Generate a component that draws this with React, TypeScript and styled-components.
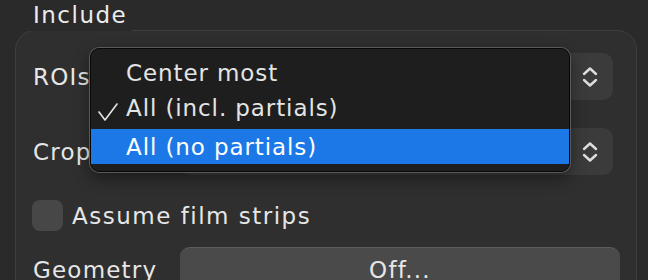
import React from "react";
import styled, { createGlobalStyle } from "styled-components";

const Global = createGlobalStyle`
  html, body { margin: 0; padding: 0; background: #2a2a2a; overflow: hidden; }
  body { font-family: "DejaVu Sans", "Open Sans", sans-serif; color: #e4e4e4; }
`;

const Page = styled.div`
  width: 648px;
  height: 280px;
  padding: 0 11px 0 15px;
  box-sizing: border-box;
  position: relative;
  display: flex;
  flex-direction: column;
  align-items: stretch;
`;

const Title = styled.div`
  position: relative;
  z-index: 1;
  align-self: flex-start;
  height: 31px;
  margin-bottom: -31px;
  padding: 0 5px 0 18px;
  background: #2a2a2a;
  font-size: 23px;
  line-height: 31px;
  letter-spacing: 1.5px;
  color: #ececec;
`;

const Group = styled.div`
  flex: none;
  margin-top: 30px;
  height: 300px;
  border: 1px solid #3e3e3e;
  border-radius: 20px;
  background: #2f2f2f;
  padding: 22px 23px 0 17px;
  box-sizing: border-box;
  display: flex;
  flex-direction: column;
`;

const Row = styled.div<{ $h: number; $gap?: number }>`
  display: flex;
  align-items: center;
  flex: none;
  height: ${(p) => p.$h}px;
  margin-bottom: ${(p) => p.$gap ?? 0}px;
`;

const Label = styled.div`
  width: 147px;
  flex: none;
  font-size: 23px;
  letter-spacing: 1.2px;
  color: #e6e6e6;
`;

const Popup = styled.div`
  flex: 1;
  height: 47px;
  border-radius: 10px;
  background: #3b3b3b;
  display: flex;
  align-items: center;
  justify-content: flex-end;
  padding-right: 13px;
`;

const Check = styled.div`
  width: 31px;
  height: 31px;
  border-radius: 8px;
  background: #474747;
  flex: none;
  margin-left: -1px;
  margin-right: 9px;
`;

const CheckText = styled.div`
  font-size: 23px;
  letter-spacing: 1.5px;
  color: #e6e6e6;
`;

const Button = styled.div`
  flex: 1;
  height: 46px;
  margin-right: -7px;
  align-self: flex-end;
  border-radius: 10px;
  background: #4a4a4a;
  border-top: 1px solid #5c5c5c;
  box-sizing: border-box;
  display: flex;
  justify-content: center;
  padding-top: 9px;
  font-size: 23px;
  letter-spacing: 1.2px;
  color: #e6e6e6;
`;

const Menu = styled.div`
  position: absolute;
  left: 90px;
  top: 48px;
  width: 480px;
  height: 124px;
  box-sizing: border-box;
  border-radius: 9px;
  background: #1e1e1e;
  border: 1px solid #070707;
  box-shadow: 0 0 0 1px #5a5a5a, 0 6px 16px rgba(0, 0, 0, 0.45);
  padding: 6px 0 0;
  z-index: 5;
`;

const Item = styled.div<{ $active?: boolean }>`
  height: 35px;
  display: flex;
  align-items: center;
  padding-left: 35px;
  margin-top: ${(p) => (p.$active ? 4 : 0)}px;
  position: relative;
  font-size: 23px;
  letter-spacing: 0.9px;
  background: ${(p) => (p.$active ? "#1b78e6" : "transparent")};
  color: ${(p) => (p.$active ? "#ffffff" : "#e4e4e4")};
`;

const Tick = styled.svg`
  position: absolute;
  left: 6px;
  top: 12px;
`;

const Stepper = () => (
  <svg width="20" height="22" viewBox="0 0 20 22" fill="none" stroke="#dedede" strokeWidth="2.4" strokeLinecap="round" strokeLinejoin="round">
    <polyline points="4,8 10,2.5 16,8" />
    <polyline points="4,14 10,19.5 16,14" />
  </svg>
);

export default function App() {
  return (
    <Page>
      <Global />
      <Title>Include</Title>
      <Group>
        <Row $h={47} $gap={28}>
          <Label>ROIs</Label>
          <Popup>
            <Stepper />
          </Popup>
        </Row>
        <Row $h={47} $gap={25}>
          <Label>Crop</Label>
          <Popup>
            <Stepper />
          </Popup>
        </Row>
        <Row $h={31} $gap={16}>
          <Check />
          <CheckText>Assume film strips</CheckText>
        </Row>
        <Row $h={46}>
          <Label>Geometry</Label>
          <Button>Off...</Button>
        </Row>
      </Group>
      <Menu>
        <Item>Center most</Item>
        <Item>
          <Tick width="22" height="20" viewBox="0 0 22 20" fill="none" stroke="#e4e4e4" strokeWidth="1.6" strokeLinecap="round" strokeLinejoin="round">
            <polyline points="2,10 8,18 20,2" />
          </Tick>
          All (incl. partials)
        </Item>
        <Item $active>All (no partials)</Item>
      </Menu>
    </Page>
  );
}
